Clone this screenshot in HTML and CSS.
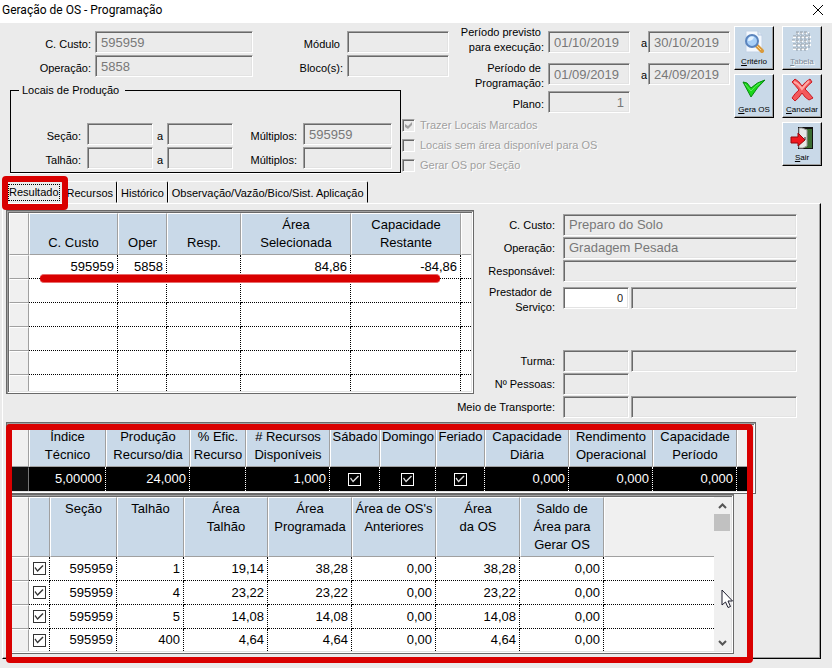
FILE: index.html
```html
<!DOCTYPE html>
<html lang="pt-BR">

<head>
    <meta charset="UTF-8">
    <meta name="viewport" content="width=device-width, initial-scale=1.0">
    <title>Geração de OS - Programação</title>
    <link rel="stylesheet" href="styles.css">
</head>

<body>

    <header class="titlebar">
        <h1>Geração de OS - Programação</h1>
        <button class="close" aria-label="Fechar">
            <svg width="12" height="12" viewBox="0 0 12 12"><path d="M1 1L11 11M11 1L1 11" stroke="#000" fill="none"/></svg>
        </button>
    </header>

    <section class="top">

        <div class="filters">

            <div class="cost">
                <label for="custo">C. Custo:</label>
                <input id="custo" class="field" value="595959" readonly>
                <label for="modulo">Módulo&nbsp;</label>
                <input id="modulo" class="field" readonly>
                <label for="operacao">Operação:</label>
                <input id="operacao" class="field" value="5858" readonly>
                <label for="bloco">Bloco(s):</label>
                <input id="bloco" class="field" readonly>
            </div>

            <div class="periods">
                <label for="prev1">Período previsto&nbsp;<br>para execução:</label>
                <input id="prev1" class="field" value="01/10/2019" readonly>
                <label class="to" for="prev2">a</label>
                <input id="prev2" class="field" value="30/10/2019" readonly>
                <label for="prog1">Período de&nbsp;<br>Programação:</label>
                <input id="prog1" class="field" value="01/09/2019" readonly>
                <label class="to" for="prog2">a</label>
                <input id="prog2" class="field" value="24/09/2019" readonly>
                <label class="single" for="plano">Plano:</label>
                <input id="plano" class="field num" value="1" readonly>
            </div>

            <fieldset class="locais">
                <legend>Locais de Produção</legend>
                <div class="locais-grid">
                    <label for="secao1">Seção:</label>
                    <input id="secao1" class="field" readonly>
                    <label class="to" for="secao2">a</label>
                    <input id="secao2" class="field" readonly>
                    <label for="mult1">Múltiplos:</label>
                    <input id="mult1" class="field" value="595959" readonly>
                    <label for="talhao1">Talhão:</label>
                    <input id="talhao1" class="field" readonly>
                    <label class="to" for="talhao2">a</label>
                    <input id="talhao2" class="field" readonly>
                    <label for="mult2">Múltiplos:</label>
                    <input id="mult2" class="field" readonly>
                </div>
            </fieldset>

            <div class="options">
                <label><input type="checkbox" class="check" checked disabled>Trazer Locais Marcados</label>
                <label><input type="checkbox" class="check" disabled>Locais sem área disponível para OS</label>
                <label><input type="checkbox" class="check" disabled>Gerar OS por Seção</label>
            </div>

        </div>

        <div class="toolbar">
            <button class="tool">
                <svg width="24" height="24" viewBox="0 0 24 24">
                    <path d="M4 1H16L20 5V22H4Z" fill="#f4f8fd" stroke="#c3d3e6"/>
                    <path d="M16 1V5H20" fill="#dfe9f5" stroke="#b5c8df"/>
                    <path d="M14 15L20 21" stroke="#d99a3c" stroke-width="4" stroke-linecap="round"/>
                    <path d="M14 15L19 20" stroke="#ffd58a" stroke-width="1"/>
                    <circle cx="10" cy="11" r="6" fill="#a9d0f8" stroke="#5b84bd" stroke-width="2"/>
                    <path d="M6 11A4 4 0 0 1 12 7Q11 11 6 11Z" fill="#e3f2ff"/>
                </svg>
                <span><u>C</u>ritério</span>
            </button>
            <button class="tool" disabled>
                <svg width="24" height="24" viewBox="0 0 24 24">
                    <path d="M6 3H19M3 7H21M2 11H21M3 15H21M3 19H18" stroke="#fff" stroke-width="2" stroke-dasharray="3 1" fill="none"/>
                    <path d="M6 2H18M3 6H20M2 10H20M3 14H20M3 18H17M7 2V21M11 2V21M15 2V21M19 3V19" stroke="#8e9aa6" stroke-dasharray="3 1" fill="none"/>
                </svg>
                <span><u>T</u>abela</span>
            </button>
            <button class="tool">
                <svg width="24" height="24" viewBox="0 0 24 24">
                    <path d="M1 4L5 5L9 10Q15 4 23 2Q15 9 9 19Z" fill="#1bd81b" stroke="#078a10" stroke-linejoin="round"/>
                    <path d="M3 6L9 13Q13 8 18 5" stroke="#5cf05c" fill="none"/>
                </svg>
                <span><u>G</u>era OS</span>
            </button>
            <button class="tool">
                <svg width="24" height="24" viewBox="0 0 24 24">
                    <path d="M2 4L5 1Q9 3 12 8Q16 3 20 1L22 4Q18 7 15 11Q19 15 23 20L19 22Q15 20 12 15Q9 20 5 23L2 20Q5 15 9 12Q5 7 2 4Z" fill="#f4595c" stroke="#c81a22" stroke-linejoin="round"/>
                    <path d="M4 4Q9 6 12 11Q15 7 19 3" stroke="#ffa9a5" stroke-width="2" fill="none"/>
                </svg>
                <span><u>C</u>ancelar</span>
            </button>
            <button class="tool last">
                <svg width="24" height="24" viewBox="0 0 24 24">
                    <rect x="8" y="1" width="15" height="22" fill="#111"/>
                    <path d="M16 3H22V22H12Z" fill="#3c6d32"/>
                    <path d="M9 2H12L17 4V20L13 22H9Z" fill="#e6e8e6" stroke="#999"/>
                    <path d="M15 11V14" stroke="#222"/>
                    <path d="M1 11H8V7L15 14L8 20V17H1Z" fill="#f01820" stroke="#96070b" stroke-linejoin="round"/>
                </svg>
                <span><u>S</u>air</span>
            </button>
        </div>

    </section>

    <nav class="tabs" role="tablist">
        <button class="tab active" role="tab" aria-selected="true"><span>Resultado</span></button>
        <button class="tab" role="tab">Recursos</button>
        <button class="tab" role="tab">Histórico</button>
        <button class="tab" role="tab">Observação/Vazão/Bico/Sist. Aplicação</button>
        <i class="mark mark-tab"></i>
    </nav>

    <main class="panel">

        <div class="summary">

            <div class="frame frame-cost">
                <table class="grid">
                    <colgroup>
                        <col class="c20"><col class="c89"><col class="c49"><col class="c74"><col class="c110"><col class="c110"><col>
                    </colgroup>
                    <thead>
                        <tr class="two">
                            <td class="rowhead"></td>
                            <th>C. Custo</th>
                            <th>Oper</th>
                            <th>Resp.</th>
                            <th>Área<br>Selecionada</th>
                            <th>Capacidade<br>Restante</th>
                            <td class="rowhead end"></td>
                        </tr>
                    </thead>
                    <tbody>
                        <tr><td class="rowhead"></td><td>595959</td><td>5858</td><td></td><td>84,86</td><td>-84,86</td><td></td></tr>
                        <tr><td class="rowhead"></td><td></td><td></td><td></td><td></td><td></td><td></td></tr>
                        <tr><td class="rowhead"></td><td></td><td></td><td></td><td></td><td></td><td></td></tr>
                        <tr><td class="rowhead"></td><td></td><td></td><td></td><td></td><td></td><td></td></tr>
                        <tr><td class="rowhead"></td><td></td><td></td><td></td><td></td><td></td><td></td></tr>
                        <tr class="cut"><td class="rowhead"></td><td></td><td></td><td></td><td></td><td></td><td></td></tr>
                    </tbody>
                </table>
                <i class="mark-line"></i>
            </div>

            <div class="details">
                <div class="detail">
                    <label for="dcusto">C. Custo:</label>
                    <input id="dcusto" class="field" value="Preparo do Solo" readonly>
                </div>
                <div class="detail">
                    <label for="doper">Operação:</label>
                    <input id="doper" class="field" value="Gradagem Pesada" readonly>
                </div>
                <div class="detail">
                    <label for="dresp">Responsável:</label>
                    <input id="dresp" class="field" readonly>
                </div>
                <div class="detail tall">
                    <label for="dprest">Prestador de&nbsp;<br>Serviço:</label>
                    <input id="dprest" class="field small edit" value="0">
                    <input class="field" aria-label="Nome do prestador" readonly>
                </div>
                <div class="detail">
                    <label for="dturma">Turma:</label>
                    <input id="dturma" class="field small" readonly>
                    <input class="field" aria-label="Nome da turma" readonly>
                </div>
                <div class="detail">
                    <label for="dpessoas">Nº Pessoas:</label>
                    <input id="dpessoas" class="field small" readonly>
                </div>
                <div class="detail">
                    <label for="dtransp">Meio de Transporte:</label>
                    <input id="dtransp" class="field small" readonly>
                    <input class="field" aria-label="Nome do transporte" readonly>
                </div>
            </div>

        </div>

        <div class="results">

            <div class="frame frame-index">
                <table class="grid">
                    <colgroup>
                        <col class="c20"><col class="c77"><col class="c84"><col class="c56"><col class="c84"><col class="c50"><col class="c56"><col class="c49"><col class="c84"><col class="c84"><col class="c84"><col>
                    </colgroup>
                    <thead>
                        <tr class="two">
                            <td class="rowhead"></td>
                            <th>Índice<br>Técnico</th>
                            <th>Produção<br>Recurso/dia</th>
                            <th>% Efic.<br>Recurso</th>
                            <th># Recursos<br>Disponíveis</th>
                            <th class="up">Sábado</th>
                            <th class="up">Domingo</th>
                            <th class="up">Feriado</th>
                            <th>Capacidade<br>Diária</th>
                            <th>Rendimento<br>Operacional</th>
                            <th>Capacidade<br>Período</th>
                            <td class="rowhead end"></td>
                        </tr>
                    </thead>
                    <tbody>
                        <tr class="selected">
                            <td class="rowhead"></td>
                            <td>5,00000</td>
                            <td>24,000</td>
                            <td></td>
                            <td>1,000</td>
                            <td class="mid"><input type="checkbox" class="check" aria-label="Sábado" checked></td>
                            <td class="mid"><input type="checkbox" class="check" aria-label="Domingo" checked></td>
                            <td class="mid"><input type="checkbox" class="check" aria-label="Feriado" checked></td>
                            <td>0,000</td>
                            <td>0,000</td>
                            <td>0,000</td>
                            <td></td>
                        </tr>
                    </tbody>
                </table>
            </div>

            <div class="frame frame-plots">
                <table class="grid">
                    <colgroup>
                        <col class="c20"><col class="c21"><col class="c67"><col class="c67"><col class="c84"><col class="c84"><col class="c84"><col class="c84"><col class="c84"><col>
                    </colgroup>
                    <thead>
                        <tr class="three">
                            <td class="rowhead"></td>
                            <th></th>
                            <th>Seção</th>
                            <th>Talhão</th>
                            <th>Área<br>Talhão</th>
                            <th>Área<br>Programada</th>
                            <th>Área de OS's<br>Anteriores</th>
                            <th>Área<br>da OS</th>
                            <th>Saldo de<br>Área para<br>Gerar OS</th>
                            <td class="rowhead end"></td>
                        </tr>
                    </thead>
                    <tbody>
                        <tr><td class="rowhead"></td><td class="mid"><input type="checkbox" class="check" aria-label="Talhão 1" checked></td><td>595959</td><td>1</td><td>19,14</td><td>38,28</td><td>0,00</td><td>38,28</td><td>0,00</td><td></td></tr>
                        <tr><td class="rowhead"></td><td class="mid"><input type="checkbox" class="check" aria-label="Talhão 4" checked></td><td>595959</td><td>4</td><td>23,22</td><td>23,22</td><td>0,00</td><td>23,22</td><td>0,00</td><td></td></tr>
                        <tr><td class="rowhead"></td><td class="mid"><input type="checkbox" class="check" aria-label="Talhão 5" checked></td><td>595959</td><td>5</td><td>14,08</td><td>14,08</td><td>0,00</td><td>14,08</td><td>0,00</td><td></td></tr>
                        <tr class="near"><td class="rowhead"></td><td class="mid"><input type="checkbox" class="check" aria-label="Talhão 400" checked></td><td>595959</td><td>400</td><td>4,64</td><td>4,64</td><td>0,00</td><td>4,64</td><td>0,00</td><td></td></tr>
                    </tbody>
                </table>
                <div class="scroll">
                    <button aria-label="Subir"><svg width="9" height="6" viewBox="0 0 9 6"><path d="M1 5L4.500 1.500L8 5" stroke="#555" stroke-width="2" fill="none"/></svg></button>
                    <div class="thumb"></div>
                    <button class="down" aria-label="Descer"><svg width="9" height="6" viewBox="0 0 9 6"><path d="M1 1L4.500 4.500L8 1" stroke="#555" stroke-width="2" fill="none"/></svg></button>
                </div>
                <svg class="pointer" width="13" height="20" viewBox="0 0 13 20"><path d="M1 1V16L4.500 13L7 18.500L9.500 17.500L7 12H11.500Z" fill="#fff" stroke="#1c1c2c"/></svg>
            </div>

            <i class="mark mark-results"></i>

        </div>

    </main>

</body>

</html>
```

FILE: styles.css
```css
* {
    box-sizing: border-box;
}

body {
    margin: 0;
    background: #ebebeb;
    color: #000;
    font: 11px/15px "Liberation Sans", Arial, sans-serif;
}

button, input {
    font: inherit;
    color: inherit;
    margin: 0;
    padding: 0;
}

/* title bar */

.titlebar {
    display: flex;
    align-items: center;
    justify-content: space-between;
    height: 23px;
    padding: 0 7px 3px 2px;
    background: #fff;
}

.titlebar h1 {
    margin: 0;
    font: 12px/18px Roboto, "Open Sans", sans-serif;
}

.close {
    display: flex;
    padding: 1px;
    border: 0;
    background: none;
}

/* filters */

.top {
    display: flex;
    justify-content: space-between;
    padding-right: 10px;
}

.filters {
    flex: 1;
    display: grid;
    grid-template-columns: 401px 49px 1fr;
    grid-template-rows: 60px 31px 61px;
}

.filters label, .detail label {
    padding: 4px 4px 0 0;
    text-align: right;
}

.filters .to {
    padding-right: 0;
    text-align: center;
}

.field {
    width: 100%;
    min-width: 0;
    height: 22px;
    padding: 0 5px;
    border: 1px solid;
    border-color: #a0a0a0 #fff #fff #a0a0a0;
    box-shadow: inset 1px 1px #696969, inset -1px -1px #e3e3e3;
    background: #ebebeb;
    color: #787878;
    font-size: 13px;
}

.num {
    text-align: right;
}

.cost {
    grid-column: 1 / 3;
    display: grid;
    grid-template-columns: 95px 158px 94px 102px;
    align-content: start;
    align-items: center;
    row-gap: 2px;
    padding-top: 8px;
}

.periods {
    grid-column: 3;
    grid-row: 1 / 3;
    align-self: start;
    display: grid;
    grid-template-columns: 1fr 82px 18px 82px;
    grid-template-rows: 36px 28px 28px;
    align-items: center;
    padding-top: 1px;
}

.periods label {
    align-self: start;
    padding-top: 1px;
}

.periods .to, .periods .single {
    align-self: center;
    padding-top: 4px;
}

.periods .to {
    padding: 2px 1px 0 0;
    text-align: right;
}

.locais {
    grid-column: 1;
    grid-row: 2 / 4;
    align-self: start;
    min-width: 0;
    margin: 0 0 0 10px;
    padding: 25px 8px 3px 0;
    border: 1px solid #000;
    box-shadow: 0 1px #fff;
}

.locais legend {
    margin-left: 8px;
    padding: 0 6px 0 3px;
}

.locais-grid {
    display: grid;
    grid-template-columns: 76px 66px 14px 66px 70px 1fr;
    align-items: center;
    row-gap: 2px;
}

.locais-grid label {
    padding-right: 6px;
}

.options {
    grid-column: 2 / 4;
    grid-row: 3;
    padding: 1px 0 0 1px;
}

.options label {
    display: flex;
    align-items: center;
    gap: 5px;
    height: 20px;
    padding: 1px 0 0;
    color: #a0a0a0;
    text-shadow: 1px 1px #fff;
    white-space: nowrap;
}

.check {
    appearance: none;
    display: block;
    width: 13px;
    height: 13px;
    border: 1px solid #333;
}

.check:checked::before {
    content: "";
    display: block;
    width: 11px;
    height: 11px;
    background: #333;
    clip-path: polygon(1px 5px, 2px 4px, 4px 7px, 9px 2px, 10px 3px, 4px 9px);
}

.options .check {
    border-color: #a0a0a0 #fff #fff #a0a0a0;
    box-shadow: inset 1px 1px #696969;
}

.options .check:checked::before {
    background: #a0a0a0;
    clip-path: polygon(2px 4px, 5px 6px, 9px 2px, 9px 5px, 5px 9px, 2px 7px);
}

/* toolbar */

.toolbar {
    display: grid;
    grid-template-columns: 40px 40px;
    grid-auto-rows: 44px;
    gap: 4px 8px;
    padding: 3px 0 0 4px;
}

.tool {
    display: flex;
    flex-direction: column;
    align-items: center;
    justify-content: space-between;
    padding: 3px 0 1px;
    border: 1px solid;
    border-color: #fff #000 #000 #fff;
    box-shadow: inset -1px -1px #a0a0a0;
    background: #c9d9e8;
    font-size: 8px;
    line-height: 12px;
}

.tool:disabled {
    color: #7f8b97;
    text-shadow: 1px 1px #fff;
}

.tool.last {
    grid-column: 2;
}

/* tabs */

.tabs {
    position: relative;
    display: flex;
    height: 22px;
    margin-top: 6px;
    padding-left: 5px;
}

.tab {
    padding: 2px 3px 0;
    border: 1px solid;
    border-color: #fff #000 transparent #fff;
    border-radius: 2px 2px 0 0;
    background: #ebebeb;
}

.tab.active {
    padding-top: 0;
}

.tab.active span {
    display: block;
    outline: 1px dotted #000;
}

.mark {
    position: absolute;
    border: 6px solid #d90000;
    border-radius: 4px;
    pointer-events: none;
}

.mark-tab {
    left: 2px;
    top: -5px;
    width: 66px;
    height: 34px;
    z-index: 1;
}

/* result panel */

.panel {
    margin: 0 11px 9px 2px;
    padding: 6px 0 4px 3px;
    border: 1px solid;
    border-color: #fff #000 #000 #fff;
    box-shadow: inset -1px -1px #a0a0a0;
}

.summary {
    display: flex;
    align-items: flex-start;
    margin-bottom: 4px;
}

.frame {
    position: relative;
    padding: 2px;
    border: 1px solid #696969;
    background: #fff;
    box-shadow: inset 1px 1px #a0a0a0, inset -1px -1px #fff, inset 2px 2px #696969, inset -2px -2px #e3e3e3;
}

.frame-cost {
    width: 468px;
}

.frame-index {
    width: 750px;
}

.frame-plots {
    display: flex;
    width: 728px;
}

.grid {
    width: 100%;
    table-layout: fixed;
    border-spacing: 0;
    font-size: 13px;
    line-height: 18px;
}

.c20 { width: 20px; }
.c21 { width: 21px; }
.c49 { width: 49px; }
.c50 { width: 50px; }
.c56 { width: 56px; }
.c67 { width: 67px; }
.c74 { width: 74px; }
.c77 { width: 77px; }
.c84 { width: 84px; }
.c89 { width: 89px; }
.c110 { width: 110px; }

.grid th {
    padding: 2px 0;
    border: 1px solid;
    border-color: #fff #a0a0a0 #a0a0a0 #fff;
    background: #c9d9e8;
    font-weight: normal;
    vertical-align: bottom;
    white-space: nowrap;
}

.grid .up, .three th {
    vertical-align: top;
}

.two {
    height: 42px;
}

.three {
    height: 60px;
}

.grid tbody tr {
    height: 24px;
}

.grid tbody .cut {
    height: 16px;
}

.grid tbody .near {
    height: 22px;
}

.grid td {
    padding: 0 3px 0 0;
    border: 0 dotted #000;
    border-width: 0 1px 1px 0;
    text-align: right;
}

.grid td:last-child {
    border-right: 0;
}

.grid tbody tr:last-child td {
    border-bottom-width: 0;
}

.grid .mid {
    padding: 0;
}

.mid .check {
    margin: 0 auto;
}

.grid .rowhead {
    border: 1px solid;
    border-color: #fff #a0a0a0 #a0a0a0 #fff;
    background: #f0f0f0;
}

.grid .end {
    border-right: 0;
}

.grid tbody .selected td {
    border-color: #fff;
    border-bottom-width: 1px;
    background: #000;
    color: #fff;
}

.grid tbody .selected .rowhead {
    border-color: #111 #777 #777 #111;
    background: #111;
}

.selected .check {
    border-color: #fff;
}

.selected .check:checked::before {
    background: #ddd;
}

.mark-line {
    position: absolute;
    left: 33px;
    top: 63px;
    width: 400px;
    height: 9px;
    border: 1px solid #e86c6c;
    border-width: 1px 0;
    border-radius: 4px;
    background: #d90000;
}

/* details form */

.details {
    flex: 1;
    padding: 3px 23px 0 0;
}

.detail {
    display: flex;
    align-items: center;
    gap: 2px;
    height: 23px;
}

.detail label {
    flex: 0 0 87px;
    min-width: 0;
    display: flex;
    justify-content: flex-end;
    padding: 2px 6px 0 0;
    white-space: nowrap;
}

.detail .small {
    flex: 0 0 66px;
}

.detail.tall {
    align-items: flex-start;
    height: 67px;
    padding-top: 5px;
}

.detail.tall label {
    display: block;
    margin-top: -4px;
}

.edit {
    background: #fff;
    color: #222;
    font-size: 11px;
    text-align: right;
}

/* lower grids */

.results {
    position: relative;
}

.scroll {
    flex: 0 0 17px;
    display: flex;
    flex-direction: column;
    padding-right: 1px;
    background: #f0f0f0;
}

.scroll button {
    display: flex;
    align-items: center;
    justify-content: center;
    height: 17px;
    border: 0;
    background: none;
}

.scroll .down {
    margin-top: auto;
}

.thumb {
    height: 17px;
    background: #c1c1c1;
}

.pointer {
    position: absolute;
    left: 714px;
    top: 94px;
    z-index: 1;
}

.mark-results {
    left: 0;
    top: 2px;
    width: 747px;
    height: 239px;
}
```
